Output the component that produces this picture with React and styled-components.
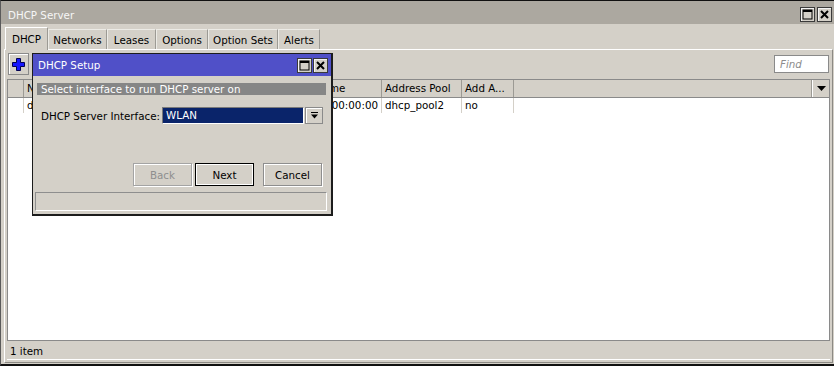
import React from 'react';
import styled, { createGlobalStyle } from 'styled-components';

const Global = createGlobalStyle`
  html, body { margin: 0; padding: 0; background: #d4d0c8; }
  body { font-family: "DejaVu Sans", "Liberation Sans", sans-serif; font-size: 10.3px; color: #000; }
  * { box-sizing: border-box; }
`;

const Window = styled.div`
  position: relative;
  width: 834px;
  height: 366px;
  background: #d4d0c8;
  border-top: 1px solid #111;
  border-left: 1px solid #5a5a5a;
  border-bottom: 2px solid #111;
  display: flex;
  flex-direction: column;
  overflow: hidden;
`;

const TitleBar = styled.div`
  height: 23px;
  flex: none;
  background: #aca8a0;
  color: #f6f6f6;
  display: flex;
  align-items: center;
  padding: 4px 2px 0 7px;
`;

const TitleText = styled.span`
  flex: 1;
  line-height: 14px;
`;

const WinButtons = styled.div`
  display: flex;
  gap: ${p => p.$gap}px;
`;

const WinButton = styled.div`
  width: 15px;
  height: 15px;
  border: 1px solid #3a3a3a;
  background: #d4d0c8;
  box-shadow: inset 1px 1px 0 #f4f4f4;
  display: flex;
  align-items: center;
  justify-content: center;
`;

const TabRow = styled.div`
  height: 25px;
  flex: none;
  display: flex;
  align-items: flex-end;
  padding-left: 4px;
`;

const Tab = styled.div`
  position: relative;
  width: ${p => p.$w}px;
  height: ${p => (p.$active ? 23 : 20)}px;
  margin-bottom: ${p => (p.$active ? -1 : 0)}px;
  z-index: ${p => (p.$active ? 2 : 1)};
  background: #d4d0c8;
  border-top: 1px solid ${p => (p.$active ? '#fff' : '#ecebe6')};
  border-left: 1px solid ${p => (p.$active ? '#fff' : '#ecebe6')};
  border-right: 1px solid #9c9a94;
  display: flex;
  align-items: center;
  justify-content: center;
  padding-top: ${p => (p.$active ? 0 : 1)}px;
  white-space: nowrap;
`;

const Panel = styled.div`
  flex: 1;
  margin: 0 1px 1px 3px;
  border-top: 1px solid #fff;
  border-left: 1px solid #fff;
  border-right: 1px solid #8c8a84;
  border-bottom: 1px solid #8c8a84;
  padding: 0 2px 2px 2px;
  display: flex;
  flex-direction: column;
`;

const Toolbar = styled.div`
  height: 29px;
  flex: none;
  display: flex;
  align-items: flex-start;
  justify-content: space-between;
  padding: 3px 1px 0 1px;
`;

const ToolButton = styled.div`
  width: 21px;
  height: 22px;
  border: 1px solid #8a8a8a;
  box-shadow: inset 1px 1px 0 #fff;
  display: flex;
  align-items: center;
  justify-content: center;
`;

const FindBox = styled.div`
  width: 55px;
  height: 18px;
  margin-top: 2px;
  background: #fff;
  border: 1px solid #8a8a8a;
  color: #8c8c8c;
  font-style: italic;
  padding-left: 5px;
  line-height: 16px;
`;

const Table = styled.div`
  flex: 1;
  background: #fff;
  border: 1px solid #8a8a8a;
  display: flex;
  flex-direction: column;
`;

const cols = '16px 76px 90px 94px 98px 80px 52px 1fr 17px';

const HeaderRow = styled.div`
  display: grid;
  grid-template-columns: ${cols};
  height: 18px;
  background: #d4d0c8;
  border-bottom: 1px solid #8a8a8a;
`;

const HeadCell = styled.div`
  border-right: 1px solid #9c9a94;
  padding-left: 3px;
  line-height: 17px;
  white-space: nowrap;
  overflow: hidden;
  &:last-child { border-right: none; border-left: 1px solid #fff; display: flex; align-items: center; justify-content: center; padding: 0; }
`;

const DataRow = styled.div`
  display: grid;
  grid-template-columns: ${cols};
  height: 15px;
`;

const Cell = styled.div`
  border-right: 1px solid ${p => (p.$blank ? 'transparent' : '#d4d0c8')};
  padding: 0 3px;
  line-height: 14px;
  white-space: nowrap;
  overflow: hidden;
  text-align: ${p => (p.$right ? 'right' : 'left')};
`;

const StatusBar = styled.div`
  height: 19px;
  flex: none;
  padding-left: 3px;
  line-height: 20px;
  border-bottom: 1px solid #fff;
`;

/* Dialog */
const Dialog = styled.div`
  position: absolute;
  left: 31px;
  top: 52px;
  width: 301px;
  height: 163px;
  background: #d4d0c8;
  border: 1px solid #1c1c1c;
  border-right-width: 2px;
  border-bottom-width: 2px;
  display: flex;
  flex-direction: column;
  z-index: 5;
`;

const DialogTitle = styled.div`
  height: 22px;
  flex: none;
  background: #5050c8;
  color: #fff;
  display: flex;
  align-items: center;
  padding: 0 3px 0 5px;
`;

const DialogBody = styled.div`
  flex: 1;
  display: flex;
  flex-direction: column;
  padding: 7px 5px 1px 4px;
`;

const Subtitle = styled.div`
  height: 12px;
  background: #868686;
  color: #fff;
  padding-left: 4px;
  line-height: 12px;
  white-space: nowrap;
`;

const FormRow = styled.div`
  display: flex;
  align-items: center;
  margin-top: 12px;
  height: 17px;
`;

const Label = styled.div`
  width: 125px;
  padding-left: 4px;
  white-space: nowrap;
`;

const SelectBox = styled.div`
  width: 142px;
  height: 17px;
  background: #0a246a;
  color: #fff;
  border: 1px solid;
  border-color: #7a7a7a #fff #fff #7a7a7a;
  padding-left: 3px;
  line-height: 15px;
`;

const DropButton = styled.div`
  width: 18px;
  height: 17px;
  margin-left: 1px;
  border: 1px solid #8a8a8a;
  box-shadow: inset 1px 1px 0 #fff;
  display: flex;
  align-items: center;
  justify-content: center;
`;

const ButtonRow = styled.div`
  display: flex;
  justify-content: flex-end;
  margin-top: 39px;
  padding-right: 4px;
`;

const Button = styled.div`
  width: 59px;
  height: 23px;
  margin-left: ${p => p.$ml}px;
  border: 1px solid ${p => (p.$default ? '#000' : p.$disabled ? '#a4a4a4' : '#8e8e8e')};
  box-shadow: ${p => (p.$default ? 'inset 1px 1px 0 #fff, inset -1px -1px 0 #fff' : 'inset 1px 1px 0 #fff, 1px 1px 0 #fff')};
  color: ${p => (p.$disabled ? '#8e8e8e' : '#000')};
  display: flex;
  align-items: center;
  justify-content: center;
`;

const StatusField = styled.div`
  margin: 6px 0 0 -2px;
  width: 292px;
  height: 19px;
  border: 1px solid;
  border-color: #8e8e8e #fff #fff #8e8e8e;
`;

const MaxIcon = () => (
  <svg width="11" height="11" viewBox="0 0 11 11">
    <rect x="1" y="1" width="9" height="9" fill="none" stroke="#000" strokeWidth="1" />
    <rect x="1" y="1" width="9" height="2" fill="#000" />
  </svg>
);

const CloseIcon = () => (
  <svg width="11" height="11" viewBox="0 0 11 11">
    <path d="M2 2 L9 9 M9 2 L2 9" stroke="#000" strokeWidth="2" />
  </svg>
);

const PlusIcon = () => (
  <svg width="15" height="15" viewBox="0 0 15 15">
    <path d="M5.5 1.5 H9.5 V5.5 H13.5 V9.5 H9.5 V13.5 H5.5 V9.5 H1.5 V5.5 H5.5 Z" fill="#1616ff" stroke="#000050" strokeWidth="1" />
  </svg>
);

const DownTriangle = () => (
  <svg width="9" height="6" viewBox="0 0 9 6">
    <path d="M0 0 H9 L4.5 5 Z" fill="#000" />
  </svg>
);

const BarArrow = () => (
  <svg width="9" height="9" viewBox="0 0 9 9">
    <rect x="1" y="1" width="7" height="1" fill="#000" />
    <path d="M1 3.5 H8 L4.5 7.5 Z" fill="#000" />
  </svg>
);

const tabs = [
  { label: 'DHCP', w: 43, active: true },
  { label: 'Networks', w: 59 },
  { label: 'Leases', w: 49 },
  { label: 'Options', w: 52 },
  { label: 'Option Sets', w: 70 },
  { label: 'Alerts', w: 42 },
];

export default function App() {
  return (
    <>
      <Global />
      <Window>
        <TitleBar>
          <TitleText>DHCP Server</TitleText>
          <WinButtons $gap={2}>
            <WinButton><MaxIcon /></WinButton>
            <WinButton><CloseIcon /></WinButton>
          </WinButtons>
        </TitleBar>
        <TabRow>
          {tabs.map(t => (
            <Tab key={t.label} $w={t.w} $active={t.active}>{t.label}</Tab>
          ))}
        </TabRow>
        <Panel>
          <Toolbar>
            <ToolButton><PlusIcon /></ToolButton>
            <FindBox>Find</FindBox>
          </Toolbar>
          <Table>
            <HeaderRow>
              <HeadCell />
              <HeadCell>N</HeadCell>
              <HeadCell />
              <HeadCell />
              <HeadCell>Lease Time</HeadCell>
              <HeadCell>Address Pool</HeadCell>
              <HeadCell>Add A...</HeadCell>
              <HeadCell />
              <HeadCell><DownTriangle /></HeadCell>
            </HeaderRow>
            <DataRow>
              <Cell />
              <Cell>d</Cell>
              <Cell />
              <Cell />
              <Cell $right>1d 00:00:00</Cell>
              <Cell>dhcp_pool2</Cell>
              <Cell>no</Cell>
              <Cell $blank />
              <Cell $blank />
            </DataRow>
          </Table>
          <StatusBar>1 item</StatusBar>
        </Panel>

        <Dialog>
          <DialogTitle>
            <TitleText>DHCP Setup</TitleText>
            <WinButtons $gap={1}>
              <WinButton><MaxIcon /></WinButton>
              <WinButton><CloseIcon /></WinButton>
            </WinButtons>
          </DialogTitle>
          <DialogBody>
            <Subtitle>Select interface to run DHCP server on</Subtitle>
            <FormRow>
              <Label>DHCP Server Interface:</Label>
              <SelectBox>WLAN</SelectBox>
              <DropButton><BarArrow /></DropButton>
            </FormRow>
            <ButtonRow>
              <Button $disabled>Back</Button>
              <Button $default $ml={3}>Next</Button>
              <Button $ml={9}>Cancel</Button>
            </ButtonRow>
            <StatusField />
          </DialogBody>
        </Dialog>
      </Window>
    </>
  );
}
